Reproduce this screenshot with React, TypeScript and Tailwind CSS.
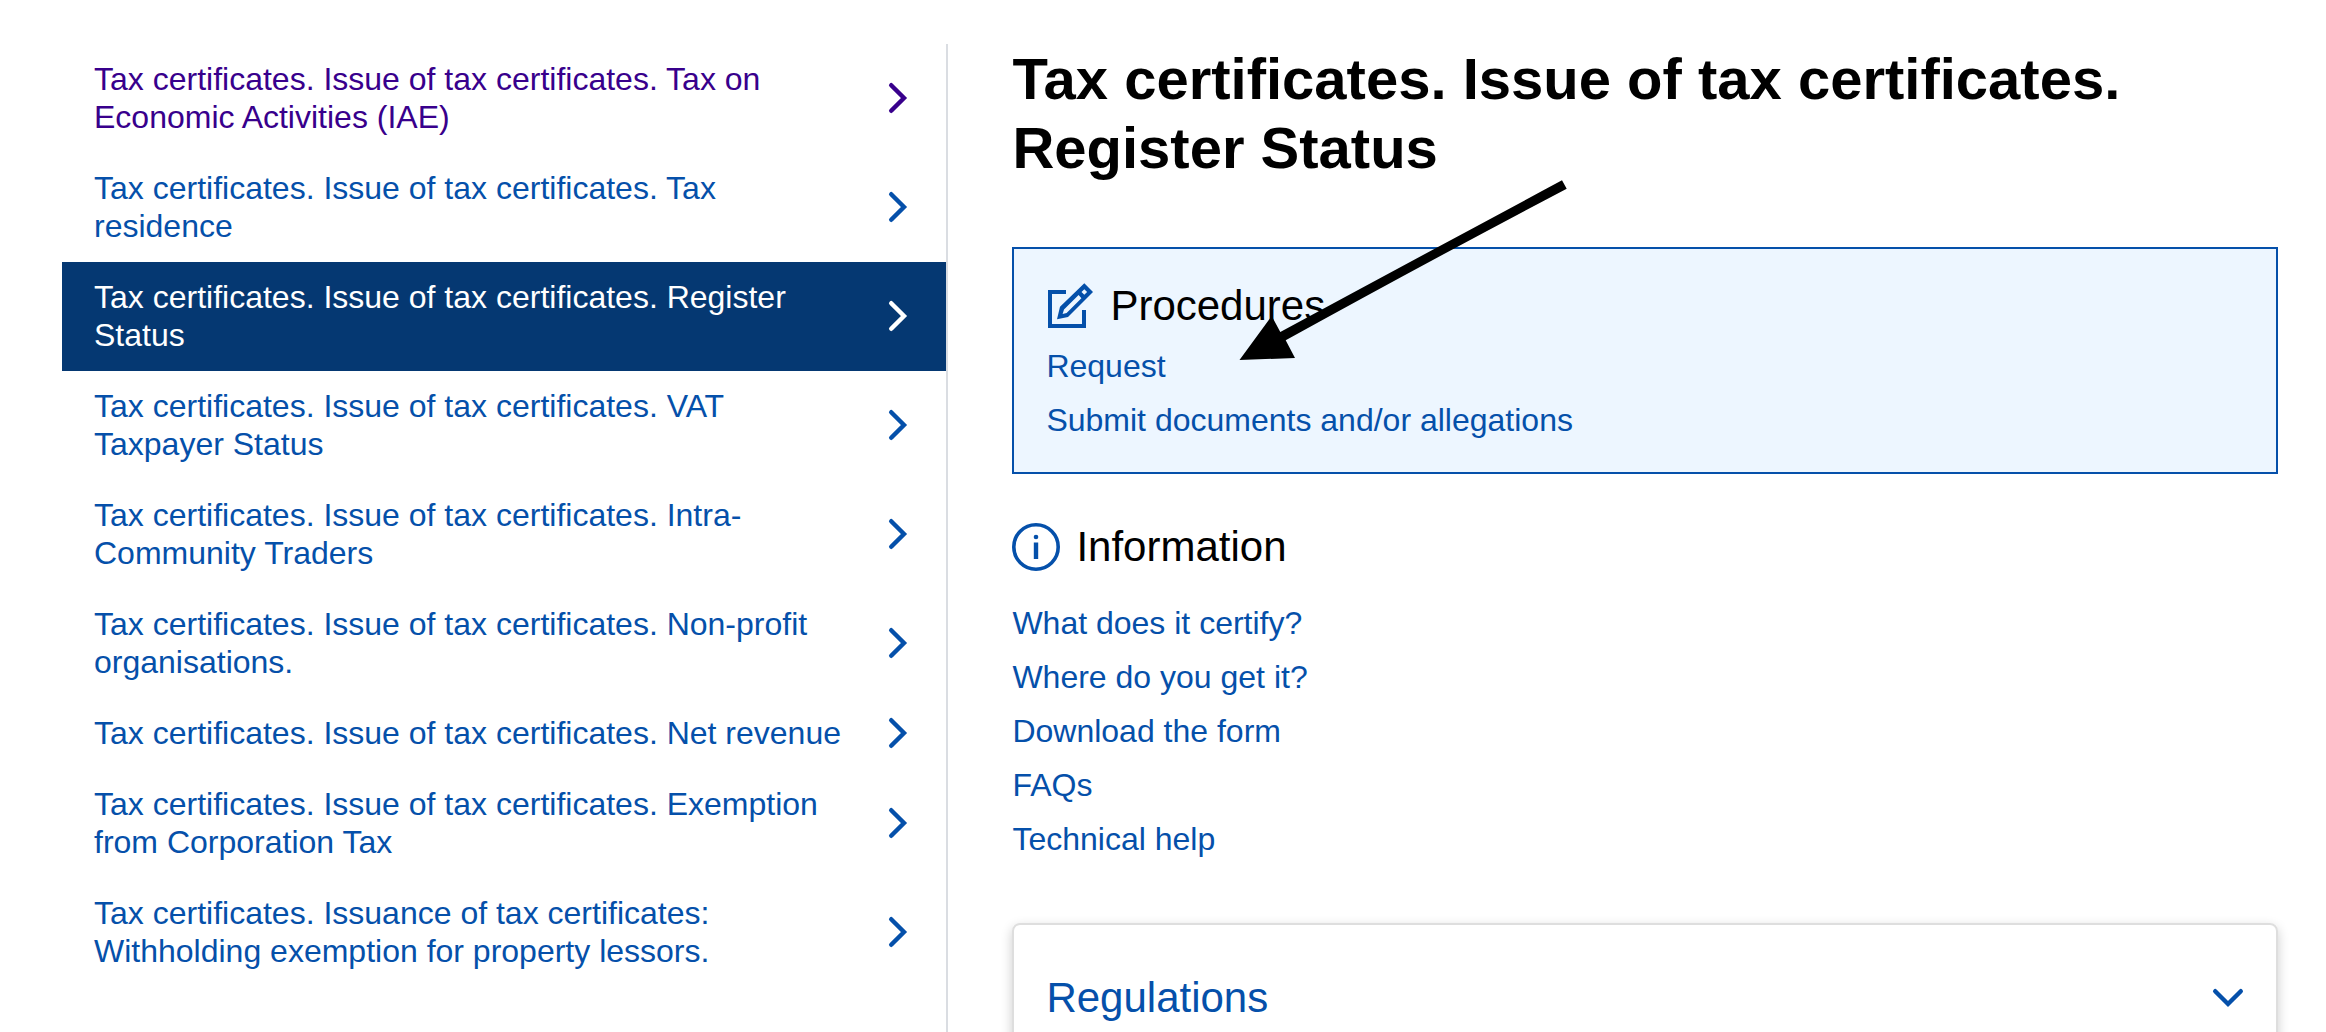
import React from 'react';

interface NavItem {
  label: string;
  active?: boolean;
  visited?: boolean;
}

const navItems: NavItem[] = [
  { label: 'Tax certificates. Issue of tax certificates. Tax on Economic Activities (IAE)', visited: true },
  { label: 'Tax certificates. Issue of tax certificates. Tax residence' },
  { label: 'Tax certificates. Issue of tax certificates. Register Status', active: true },
  { label: 'Tax certificates. Issue of tax certificates. VAT Taxpayer Status' },
  { label: 'Tax certificates. Issue of tax certificates. Intra-Community Traders' },
  { label: 'Tax certificates. Issue of tax certificates. Non-profit organisations.' },
  { label: 'Tax certificates. Issue of tax certificates. Net revenue' },
  { label: 'Tax certificates. Issue of tax certificates. Exemption from Corporation Tax' },
  { label: 'Tax certificates. Issuance of tax certificates: Withholding exemption for property lessors.' },
];

const procedures = ['Request', 'Submit documents and/or allegations'];

const information = [
  'What does it certify?',
  'Where do you get it?',
  'Download the form',
  'FAQs',
  'Technical help',
];

const Chevron: React.FC<{ className?: string }> = ({ className = '' }) => (
  <svg className={`size-8 shrink-0 ${className}`} viewBox="0 0 32 32" fill="none" stroke="currentColor" strokeWidth="4.4" strokeLinecap="round" aria-hidden="true">
    <path d="M9.2 3.2 22 16 9.2 28.8" />
  </svg>
);

const EditIcon: React.FC = () => (
  <svg className="size-12 shrink-0" viewBox="0 0 48 48" fill="none" stroke="currentColor" aria-hidden="true">
    <path strokeWidth="4" d="M20 10H4v34h34V28" />
    <path
      fill="currentColor"
      fillRule="evenodd"
      stroke="none"
      d="M38.3 1.2 47 10 22 35 11 37.3 14 24.7ZM38.3 7.2 35.5 10 38.3 12.8 41.1 10ZM32.6 13 18 27.6 16.6 32 20.6 31 35.4 16.2Z"
    />
  </svg>
);

const InfoIcon: React.FC = () => (
  <svg className="size-12 shrink-0" viewBox="0 0 48 48" fill="none" stroke="currentColor" aria-hidden="true">
    <circle cx="24" cy="24" r="22.2" strokeWidth="3.6" />
    <path strokeWidth="4.4" d="M24 19.5V36" />
    <circle cx="24" cy="14" r="2.3" fill="currentColor" stroke="none" />
  </svg>
);

// hand-drawn pointer laid over the procedures box
const Arrow: React.FC = () => (
  <svg className="pointer-events-none absolute -top-[71px] left-[222px] h-[190px] w-[340px]" viewBox="1236 178 340 190" aria-hidden="true">
    <path d="M1562 180.3Q1420 256.5 1280.3 332L1271.7 316 1239.5 360 1295 358 1285.7 340.3Q1420 266 1566.7 188.7Z" />
  </svg>
);

const LinkList: React.FC<{ links: string[] }> = ({ links }) => (
  <ul className="flex flex-col gap-4">
    {links.map(link => (
      <li key={link}>
        <a href="#" className="text-[#0550aa]">{link}</a>
      </li>
    ))}
  </ul>
);

const navColor = (item: NavItem) => {
  if (item.active) return 'bg-[#053872] text-white';
  return item.visited ? 'text-[#38008c]' : 'text-[#0550aa]';
};

const App: React.FC = () => {
  return (
    <div className="flex min-h-screen bg-white pt-11 pr-12 pl-[62px] font-['Liberation_Sans',Arial,sans-serif] text-[32px] leading-[38px] text-black">
      <nav className="w-2/5 shrink-0 border-r-2 border-[#dadde2]">
        <ul>
          {navItems.map(item => (
            <li key={item.label}>
              <a
                href="#"
                aria-current={item.active ? 'page' : undefined}
                className={`flex items-center gap-6 px-8 pt-4 pb-[17px] ${navColor(item)}`}
              >
                <span className="flex-1">{item.label}</span>
                <Chevron />
              </a>
            </li>
          ))}
        </ul>
      </nav>

      <main className="min-w-0 flex-1 pl-16">
        <h1 className="text-[58px] leading-[69px] font-bold">
          Tax certificates. Issue of tax certificates. Register Status
        </h1>

        <section className="relative mt-[65px] border-2 border-[#0550aa] bg-[#edf6ff] px-8 pt-8 pb-[33px]">
          <h2 className="flex items-center gap-4 text-[42px] leading-[50px]">
            <span className="text-[#0550aa]"><EditIcon /></span>
            Procedures
          </h2>
          <div className="mt-4">
            <LinkList links={procedures} />
          </div>
          <Arrow />
        </section>

        <section className="mt-12">
          <h2 className="flex items-center gap-4 text-[42px] leading-[50px]">
            <span className="text-[#0550aa]"><InfoIcon /></span>
            Information
          </h2>
          <div className="mt-8">
            <LinkList links={information} />
          </div>
        </section>

        <section className="mt-[65px] rounded-lg border-2 border-[#dedede] shadow-[0_4px_12px_rgba(0,0,0,0.2)]">
          <button type="button" className="flex w-full items-center justify-between px-8 pt-12 pb-12 text-left text-[42px] leading-[50px] text-[#0550aa]">
            Regulations
            <Chevron className="rotate-90" />
          </button>
        </section>
      </main>
    </div>
  );
};

export default App;
